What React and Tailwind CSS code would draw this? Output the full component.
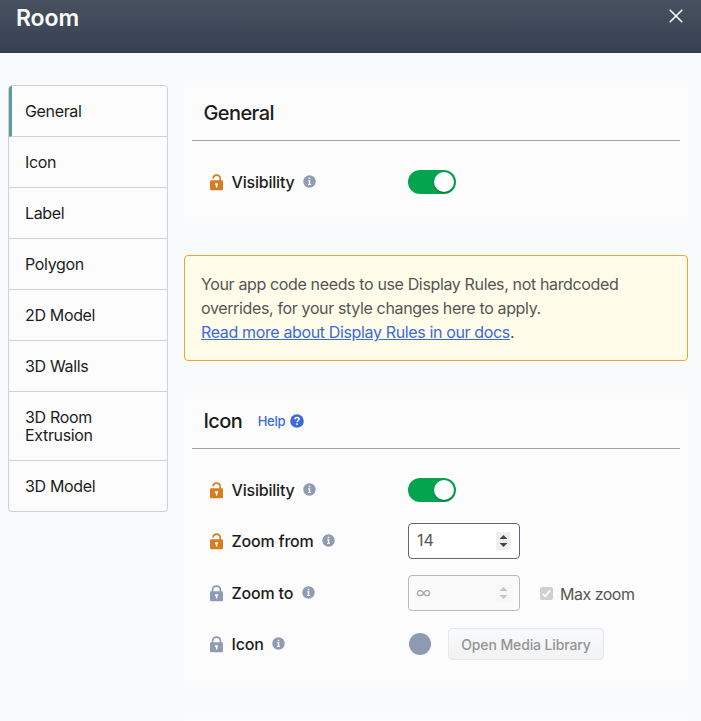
const NAV = ["General", "Icon", "Label", "Polygon", "2D Model", "3D Walls", "3D Room Extrusion", "3D Model"];

function Lock({ open }) {
  return (
    <svg width="13" height="17" viewBox="0 0 13 17" className={open ? "ml-px text-[#d57d20]" : "ml-px text-[#8e9bb0]"}>
      <path
        d={open ? "M2.900 4.300C3.300 2.200 4.600 1.100 6.500 1.100c2.300 0 3.700 1.500 3.700 3.700V8" : "M2.600 8V5c0-2.300 1.600-3.900 3.900-3.900s3.900 1.600 3.900 3.900V8"}
        fill="none"
        stroke="currentColor"
        strokeWidth="1.600"
      />
      <rect x="0" y="6.200" width="13" height="10" rx="1.200" fill="currentColor" />
      <path d="M5.100 9.300h2.800v2H7.300v2.300H5.900v-2.300h-.8z" fill="#fff" />
    </svg>
  );
}

function Info() {
  return (
    <svg width="13" height="13" viewBox="0 0 13 13" className="mb-px">
      <circle cx="6.500" cy="6.500" r="6.200" fill="#8e9bb0" />
      <path d="M5.700 2.800h1.600v1.400H5.700zM5.100 5.300h2.200v3.700h.8v.9H5v-.9h.8V6.200h-.7z" fill="#fcfcfc" />
    </svg>
  );
}

function Label({ open, children }) {
  return (
    <div className="flex w-[199px] shrink-0 items-center">
      <Lock open={open} />
      <span className="mx-[8.500px] text-[16px] font-medium leading-6 tracking-[-0.2px] text-[#1c1c1c]">{children}</span>
      <Info />
    </div>
  );
}

function Toggle() {
  return (
    <div className="flex h-6 w-12 items-center justify-end rounded-full bg-[#03a44e] pr-[2px]">
      <div className="size-5 rounded-full bg-white shadow-[0_1px_2px_rgba(0,0,0,0.35)]" />
    </div>
  );
}

function NumberBox({ value, disabled }) {
  return (
    <div
      className={
        disabled
          ? "flex h-9 w-28 items-center justify-between rounded border border-[#b4b9c2] bg-[#fafafa] pl-[7px] pr-2 text-[#acacac]"
          : "flex h-9 w-28 items-center justify-between rounded border border-[#5f697a] bg-white pl-2 pr-2 text-[#555]"
      }
    >
      <span className="pb-[2px] text-[16px] leading-6">{value}</span>
      <svg width="15" height="18" viewBox="0 0 15 18" className={disabled ? "text-[#c6c6c6]" : "text-[#444]"}>
        <rect width="15" height="18" fill={disabled ? "#f7f7f7" : "#efefef"} />
        <path d="M3.500 7L7.500 3L11.500 7zM3.500 11L7.500 15L11.500 11z" fill="currentColor" />
      </svg>
    </div>
  );
}

function Card({ title, help, children }) {
  return (
    <section className="rounded-md bg-[#fcfcfc] px-2">
      <header className="flex h-14 items-center border-b border-[#9aa2b2] pl-[11.500px]">
        <h2 className="text-[20px] font-medium leading-7 tracking-[-0.6px] text-[#1c1c1c]">{title}</h2>
        {help && (
          <a className="ml-[15.500px] flex items-center text-[13px] font-medium leading-5 tracking-[-0.3px] text-[#3a6bd8]">
            Help
            <svg width="14" height="14" viewBox="0 0 14 14" className="ml-[5px]">
              <circle cx="7" cy="7" r="6.800" fill="#3a6bd8" />
              <path d="M4.900 5.300C5 4 5.800 3.400 7 3.400c1.300 0 2.100.7 2.100 1.700C9.100 6.500 7 6.500 7 8.300" fill="none" stroke="#fff" strokeWidth="1.500" />
              <rect x="6.200" y="9.300" width="1.600" height="1.600" fill="#fff" />
            </svg>
          </a>
        )}
      </header>
      {children}
    </section>
  );
}

export default function App() {
  return (
    <div className="h-[721px] w-[701px] overflow-hidden bg-[#f9fafc] font-['Inter','Liberation_Sans',sans-serif]">
      <header className="flex h-[53px] justify-between border-b border-[#343d4e] bg-linear-to-b from-[#48515f] to-[#384152] pl-4 pr-[18px]">
        <h1 className="mt-[3px] text-[23px] font-semibold leading-[30px] tracking-[-0.1px] text-[#fafafa]">Room</h1>
        <svg width="14" height="14" viewBox="0 0 14 14" className="mt-[9px]">
          <path d="M.7.7l12.600 12.600M13.300.7L.7 13.300" stroke="#fff" strokeWidth="1.600" fill="none" />
        </svg>
      </header>
      <div className="flex items-start gap-4 pl-2 pr-[13px] pt-8">
        <nav className="w-40 shrink-0 divide-y divide-[#cfd1d9] overflow-hidden rounded border border-[#cfd1d9] bg-[#fcfcfc]">
          {NAV.map((name, i) => (
            <div key={name} className={i === 0 ? "border-l-[3px] border-l-[#5f9a98] py-4 pl-[13px] pr-4" : "py-4 pl-4 pr-10"}>
              <div className="text-[16px] leading-[18px] tracking-[-0.34px] text-[#1c1c1c]">{name}</div>
            </div>
          ))}
        </nav>
        <main className="flex min-w-0 grow flex-col gap-8">
          <Card title="General">
            <div className="flex items-center py-[29px] pl-[17px]">
              <Label open>Visibility</Label>
              <Toggle />
            </div>
          </Card>
          <div className="rounded border border-[#f0a431] bg-[#fffcea] p-4 text-[16px] leading-6 tracking-[-0.36px] text-[#555]">
            Your app code needs to use Display Rules, not hardcoded
            <br />
            overrides, for your style changes here to apply.
            <br />
            <a className="text-[#3a6bd8] underline">Read more about Display Rules in our docs</a>.
          </div>
          <Card title="Icon" help>
            <div className="flex flex-col pb-[25px] pl-[17px] pt-[29px]">
              <div className="flex h-6 items-center">
                <Label open>Visibility</Label>
                <Toggle />
              </div>
              <div className="mt-[21px] flex h-9 items-center">
                <Label open>Zoom from</Label>
                <NumberBox value="14" />
              </div>
              <div className="mt-4 flex h-9 items-center">
                <Label>Zoom to</Label>
                <NumberBox value="∞" disabled />
                <div className="ml-5 flex items-center gap-[7px]">
                  <svg width="13" height="13" viewBox="0 0 13 13">
                    <rect width="13" height="13" rx="2" fill="#d0d0d0" />
                    <path d="M2.800 6.800l2.500 2.600 4.800-6" fill="none" stroke="#fafafa" strokeWidth="1.900" />
                  </svg>
                  <span className="mt-[2px] text-[16px] leading-6 tracking-[-0.5px] text-[#555]">Max zoom</span>
                </div>
              </div>
              <div className="mt-[17px] flex h-8 items-center">
                <Label>Icon</Label>
                <div className="ml-[1px] size-[22px] rounded-full bg-[#8d9aaf]" />
                <div className="ml-[17px] flex h-8 w-39 items-center justify-center rounded border border-[#e5e7eb] bg-linear-to-b from-[#f9fafb] to-[#f1f2f4] pt-px text-[14px] font-medium tracking-[-0.12px] text-[#949494]">
                  Open Media Library
                </div>
              </div>
            </div>
          </Card>
          <div className="h-10 rounded-md bg-[#fcfcfc]" />
        </main>
      </div>
    </div>
  );
}
